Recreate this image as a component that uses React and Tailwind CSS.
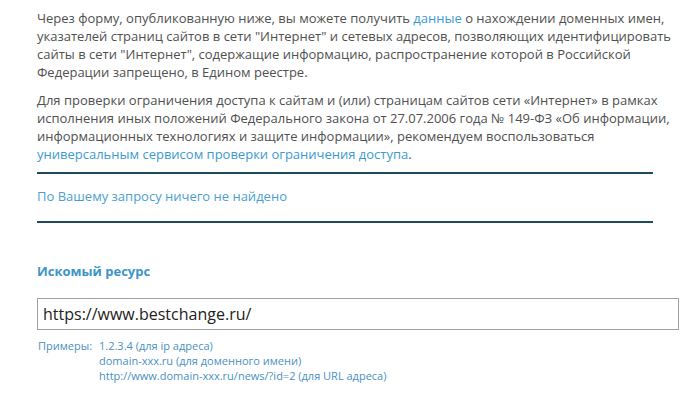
export default function App() {
  return (
    <div className="min-h-[404px] bg-white pl-[37px] pt-[9px] font-['Open_Sans',sans-serif] text-[13px] leading-[18px] text-[#505050]">
      <div className="w-[636px]">
        <p>
          Через форму, опубликованную ниже, вы можете получить <a className="text-[#3c9ad0]">данные</a> о нахождении доменных имен,
          указателей страниц сайтов в сети "Интернет" и сетевых адресов, позволяющих идентифицировать
          сайты в сети "Интернет", содержащие информацию, распространение которой в Российской
          Федерации запрещено, в Едином реестре.
        </p>
        <p className="mt-[10px]">
          Для проверки ограничения доступа к сайтам и (или) страницам сайтов сети «Интернет» в рамках
          исполнения иных положений Федерального закона от 27.07.2006 года № 149-ФЗ «Об информации,
          информационных технологиях и защите информации», рекомендуем воспользоваться{' '}
          <a className="text-[#3c9ad0]">универсальным сервисом проверки ограничения доступа</a>.
        </p>
      </div>
      <div className="mt-[9px] w-[616px] border-t-2 border-[#1f4a5e]" />
      <div className="pb-[16px] pt-[13px] text-[#4b9fcf]">По Вашему запросу ничего не найдено</div>
      <div className="w-[616px] border-t-2 border-[#1f4a5e]" />
      <div className="mt-[39px] text-[13px] font-bold text-[#3d94c8]">Искомый ресурс</div>
      <div className="mt-[18px] flex h-[32px] w-[642px] items-center border border-[#a0a0a0] px-[5px] text-[16px] text-[#222]">
        https://www.bestchange.ru/
      </div>
      <div className="mt-[8px] flex text-[11px] leading-[15px] text-[#4a90c0]">
        <span className="w-[62px] pl-px">Примеры:</span>
        <div>
          <div>1.2.3.4 (для ip адреса)</div>
          <div>domain-xxx.ru (для доменного имени)</div>
          <div>http://www.domain-xxx.ru/news/?id=2 (для URL адреса)</div>
        </div>
      </div>
    </div>
  )
}
